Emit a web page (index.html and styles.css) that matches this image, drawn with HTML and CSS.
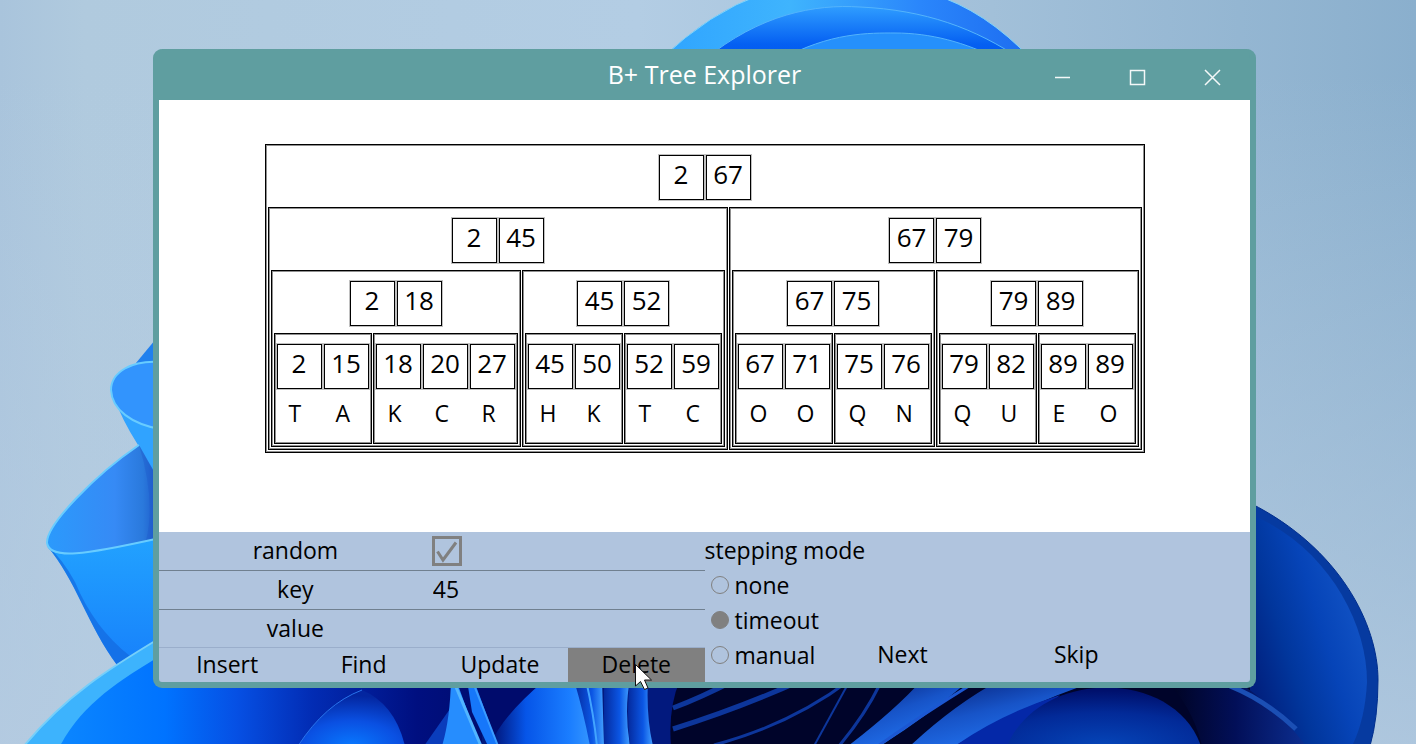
FILE: index.html
```html
<!DOCTYPE html>
<html lang="en">
<head>
<meta charset="utf-8">
<meta name="viewport" content="width=device-width, initial-scale=1">
<title>B+ Tree Explorer</title>
<link rel="stylesheet" href="styles.css">
</head>
<body>
<svg class="wallpaper" viewBox="0 0 1416 744" preserveAspectRatio="xMidYMid slice" aria-hidden="true">
  <defs>
    <linearGradient id="sky" x1="0" y1="0" x2="1" y2="0"><stop offset="0" stop-color="#a9c4dc"/><stop offset=".06" stop-color="#b0cade"/><stop offset=".45" stop-color="#b3cde4"/><stop offset=".7" stop-color="#a2c0d9"/><stop offset="1" stop-color="#8aafcd"/></linearGradient>
    <linearGradient id="fade" x1="0" y1="0" x2="0" y2="1"><stop offset=".1" stop-color="#b6cce2" stop-opacity="0"/><stop offset="1" stop-color="#b6cce2" stop-opacity=".8"/></linearGradient>
    <linearGradient id="top1" x1="0" y1="0" x2="1" y2="0"><stop offset="0" stop-color="#2fa4ff"/><stop offset=".35" stop-color="#3fb4fd"/><stop offset=".7" stop-color="#2a86fb"/><stop offset="1" stop-color="#1d6cf0"/></linearGradient>
    <linearGradient id="top2" x1="0" y1="0" x2="0" y2="1"><stop offset="0" stop-color="#2f9dff"/><stop offset=".7" stop-color="#0560f2"/><stop offset="1" stop-color="#0256ee"/></linearGradient>
    <linearGradient id="petal" x1="0" y1="0" x2="1" y2="0"><stop offset="0" stop-color="#2b9afc"/><stop offset=".6" stop-color="#368af5"/><stop offset=".85" stop-color="#2a79dc"/><stop offset="1" stop-color="#1b54c8"/></linearGradient>
    <linearGradient id="under" x1="0" y1="0" x2="0" y2="1"><stop offset="0" stop-color="#22a2ff"/><stop offset="1" stop-color="#1781fb"/></linearGradient>
    <linearGradient id="base" gradientUnits="userSpaceOnUse" x1="60" y1="0" x2="480" y2="0"><stop offset="0" stop-color="#0b86ff"/><stop offset=".25" stop-color="#0073ff"/><stop offset=".42" stop-color="#0650e4"/><stop offset=".6" stop-color="#022cb4"/><stop offset=".85" stop-color="#000f80"/><stop offset="1" stop-color="#000c70"/></linearGradient>
    <radialGradient id="bud" cx=".5" cy="1" r=".9"><stop offset="0" stop-color="#0878ff"/><stop offset=".5" stop-color="#0a50e2"/><stop offset="1" stop-color="#0326a0"/></radialGradient>
    <linearGradient id="mid" x1="0" y1="0" x2="1" y2="0"><stop offset="0" stop-color="#000b68"/><stop offset=".35" stop-color="#0655e8"/><stop offset=".75" stop-color="#1a7dff"/><stop offset="1" stop-color="#3a9bff"/></linearGradient>
    <linearGradient id="rib" x1="0" y1="0" x2="1" y2="0"><stop offset="0" stop-color="#042a9e"/><stop offset=".6" stop-color="#0b56e4"/><stop offset="1" stop-color="#42a0ff"/></linearGradient>
    <linearGradient id="blade" x1="0" y1="0" x2=".7" y2="1"><stop offset="0" stop-color="#03186c"/><stop offset=".5" stop-color="#1754c8"/><stop offset="1" stop-color="#247afa"/></linearGradient>
    <radialGradient id="orb" cx=".5" cy="1" r=".95"><stop offset="0" stop-color="#0545b8"/><stop offset=".6" stop-color="#022a98"/><stop offset="1" stop-color="#00106c"/></radialGradient>
    <linearGradient id="right" gradientUnits="userSpaceOnUse" x1="1240" y1="640" x2="1370" y2="600"><stop offset="0" stop-color="#01207e"/><stop offset=".3" stop-color="#01369c"/><stop offset=".6" stop-color="#0644b8"/><stop offset="1" stop-color="#1557c8"/></linearGradient>
    <linearGradient id="shade" x1="0" y1="0" x2="1" y2="0"><stop offset="0" stop-color="#00031f"/><stop offset=".5" stop-color="#020f58"/><stop offset="1" stop-color="#0c2e90"/></linearGradient>
  </defs>
  <rect width="1416" height="744" fill="url(#sky)"/>
  <rect width="1416" height="744" fill="url(#fade)"/>

  <path d="M660 60 Q710 12 762 -6 H932 Q985 10 1032 60Z" fill="url(#top1)" stroke="#7fd4fa" stroke-width="1"/>
  <path d="M704 60 C760 14 815 4 860 7 C925 10 975 28 1022 60Z" fill="url(#top2)" stroke="#54b4fc"/>
  <path d="M780 60 C830 32 870 33 895 33 C930 33 965 42 1000 60Z" fill="#2590fb" stroke="#54b4fc"/>

  <path d="M160 334 L136 363 L160 366Z" fill="#2080ee"/>
  <path d="M112 393 Q122 420 138 445 L160 486 V410Z" fill="#30a3ff"/>
  <path d="M160 362 C132 360 111 372 111 390 C112 410 132 424 160 429Z" fill="#3294fd" stroke="#68ccff" stroke-width="2"/>
  <path d="M139 445 C95 475 46 525 47 543 C50 560 84 555 160 538 V482Z" fill="url(#petal)"/>
  <path d="M139 445 L160 484 V538 L146 541 Q156 500 139 445Z" fill="#1c55c8" opacity=".35"/>
  <path d="M47 546 C53 560 87 553 160 538 V650 L117 665 C88 626 76 580 47 546Z" fill="url(#under)"/>
  <path d="M47 546 Q62 558 75 582 Q94 628 130 656 L117 665 C88 626 76 580 47 546Z" fill="#1267dd" opacity=".65"/>
  <path d="M139 445 C95 475 46 525 47 543 C50 560 84 555 160 538" fill="none" stroke="#68ccff" stroke-width="2"/>

  <rect x="470" y="670" width="780" height="80" fill="#02197e"/>
  <path d="M24 746 C65 696 110 668 160 638 H480 V746Z" fill="#3db3fd"/>
  <path d="M24 746 C65 696 110 668 160 638" fill="none" stroke="#76cffa" stroke-width="2"/>
  <path d="M60 746 C82 704 120 680 160 656 H482 V746Z" fill="url(#base)"/>
  <path d="M298 746 Q325 704 362 690 Q395 704 405 746Z" fill="url(#bud)"/>
  <path d="M298 746 Q325 704 362 690" fill="none" stroke="#2873ec"/>
  <path d="M424 746 L452 706 L450 746Z" fill="#0a3dbc"/>
  <path d="M488 746 Q495 715 540 680 H580 L596 746Z" fill="url(#mid)"/>
  <path d="M470 680 H545 Q500 718 490 746Z" fill="#000b6c"/>
  <path d="M451 680 Q450 720 442 746 H480 L458 685Z" fill="#268dfe"/>
  <path d="M453 680 L481 746" stroke="#52b5ff" stroke-width="3"/>
  <path d="M467 680 L472 712 L488 746 H498 L476 686Z" fill="#1677fa"/>
  <path d="M472 680 L498 746" stroke="#3b9cff" stroke-width="2"/>
  <path d="M574 680 H602 L604 746 H590 Q584 714 574 680Z" fill="url(#rib)"/>
  <path d="M586 680 Q594 716 597 746" fill="none" stroke="#42a4ff" stroke-width="2"/>
  <path d="M604 680 H630 Q624 710 630 746 H604Z" fill="url(#rib)"/>
  <path d="M630 680 H648 Q646 716 653 746 H630 Q626 710 630 680Z" fill="url(#rib)"/>
  <path d="M680 680 H1250 V746 H671 Q668 708 680 680Z" fill="#00042a"/>
  <g fill="none" stroke="#0d369b" stroke-width="5">
    <path d="M673 708 Q700 698 735 680"/>
    <path d="M673 729 Q740 708 802 680"/>
    <path d="M714 745 Q790 725 850 680" stroke-width="3"/>
    <path d="M814 746 L848 684" stroke-width="2"/>
    <path d="M839 746 Q865 715 880 684" stroke-width="3"/>
  </g>
  <path d="M848 746 Q895 710 922 680 H970 Q925 718 880 746Z" fill="url(#blade)"/>
  <path d="M878 746 Q920 716 972 684" fill="none" stroke="#1c57d2" stroke-width="3"/>
  <path d="M910 746 Q955 704 1000 680 H1100 Q1025 704 955 746Z" fill="url(#blade)"/>
  <path d="M955 746 Q1000 714 1060 695 L1010 746Z" fill="#0428a8"/>
  <path d="M1007 746 C1040 668 1174 668 1201 746Z" fill="url(#orb)"/>

  <path d="M1250 503 C1340 548 1378 625 1378 680 Q1378 718 1370 746 H1250Z" fill="#063aa0"/>
  <path d="M1250 514 C1325 545 1367 620 1367 682 Q1365 720 1352 746 H1250Z" fill="url(#right)"/>
  <path d="M1250 503 C1340 548 1378 625 1378 680 Q1378 718 1370 746" fill="none" stroke="#002d8c" stroke-width="1"/>
  <path d="M1165 680 H1235 Q1275 705 1306 746 H1202 Q1192 705 1165 680Z" fill="url(#shade)"/>
  <path d="M1230 686 Q1265 700 1296 729" fill="none" stroke="#1b4fb4" stroke-width="5"/>
</svg>

<main class="window">
  <header class="titlebar">
    <h1 class="title">B+ Tree Explorer</h1>
    <div class="window-buttons">
      <button class="window-button" aria-label="Minimize"><svg width="17" height="17" viewBox="0 0 17 17"><path d="M1 8.500H16"/></svg></button>
      <button class="window-button" aria-label="Maximize"><svg width="17" height="17" viewBox="0 0 17 17"><path d="M1.500 1.500H15.500V15.500H1.500Z"/></svg></button>
      <button class="window-button" aria-label="Close"><svg width="17" height="17" viewBox="0 0 17 17"><path d="M1 1L16 16M16 1L1 16"/></svg></button>
    </div>
  </header>

  <section class="canvas" aria-label="Tree">
    <div class="node">
      <div class="keys"><span class="key">2</span><span class="key">67</span></div>
      <div class="children">
        <div class="node">
          <div class="keys"><span class="key">2</span><span class="key">45</span></div>
          <div class="children">
            <div class="node">
              <div class="keys"><span class="key">2</span><span class="key">18</span></div>
              <div class="children">
                <div class="node leaf">
                  <div class="keys"><span class="key">2</span><span class="key">15</span></div>
                  <div class="values"><span class="value">T</span><span class="value">A</span></div>
                </div>
                <div class="node leaf">
                  <div class="keys"><span class="key">18</span><span class="key">20</span><span class="key">27</span></div>
                  <div class="values"><span class="value">K</span><span class="value">C</span><span class="value">R</span></div>
                </div>
              </div>
            </div>
            <div class="node">
              <div class="keys"><span class="key">45</span><span class="key">52</span></div>
              <div class="children">
                <div class="node leaf">
                  <div class="keys"><span class="key">45</span><span class="key">50</span></div>
                  <div class="values"><span class="value">H</span><span class="value">K</span></div>
                </div>
                <div class="node leaf">
                  <div class="keys"><span class="key">52</span><span class="key">59</span></div>
                  <div class="values"><span class="value">T</span><span class="value">C</span></div>
                </div>
              </div>
            </div>
          </div>
        </div>
        <div class="node">
          <div class="keys"><span class="key">67</span><span class="key">79</span></div>
          <div class="children">
            <div class="node">
              <div class="keys"><span class="key">67</span><span class="key">75</span></div>
              <div class="children">
                <div class="node leaf">
                  <div class="keys"><span class="key">67</span><span class="key">71</span></div>
                  <div class="values"><span class="value">O</span><span class="value">O</span></div>
                </div>
                <div class="node leaf">
                  <div class="keys"><span class="key">75</span><span class="key">76</span></div>
                  <div class="values"><span class="value">Q</span><span class="value">N</span></div>
                </div>
              </div>
            </div>
            <div class="node">
              <div class="keys"><span class="key">79</span><span class="key">89</span></div>
              <div class="children">
                <div class="node leaf">
                  <div class="keys"><span class="key">79</span><span class="key">82</span></div>
                  <div class="values"><span class="value">Q</span><span class="value">U</span></div>
                </div>
                <div class="node leaf">
                  <div class="keys"><span class="key">89</span><span class="key">89</span></div>
                  <div class="values"><span class="value">E</span><span class="value">O</span></div>
                </div>
              </div>
            </div>
          </div>
        </div>
      </div>
    </div>
  </section>

  <section class="controls">
    <form class="entry">
      <div class="field">
        <label class="field-label" for="random">random</label>
        <span class="check">
          <input class="check-box" type="checkbox" id="random" checked>
          <svg class="check-mark" width="30" height="30" viewBox="0 0 30 30" aria-hidden="true"><path d="M5.500 15.500L11 24L24 6.500"/></svg>
        </span>
      </div>
      <div class="field">
        <label class="field-label" for="key">key</label>
        <input class="field-input" type="text" id="key" value="45">
      </div>
      <div class="field">
        <label class="field-label" for="value">value</label>
        <input class="field-input" type="text" id="value">
      </div>
      <div class="actions">
        <button class="button" type="button">Insert</button>
        <button class="button" type="button">Find</button>
        <button class="button" type="button">Update</button>
        <button class="button button-active" type="button">Delete<svg class="pointer" width="20" height="28" viewBox="0 0 20 28" aria-hidden="true"><path d="M1.500 1.500V23L6.500 18.500L10.500 26.500L14 25L10.500 17H17.500Z"/></svg></button>
      </div>
    </form>
    <div class="stepping" role="radiogroup" aria-labelledby="mode">
      <span class="mode-title" id="mode">stepping mode</span>
      <label class="option"><input class="radio" type="radio" name="mode">none</label>
      <label class="option"><input class="radio" type="radio" name="mode" checked>timeout</label>
      <div class="manual">
        <label class="option"><input class="radio" type="radio" name="mode">manual</label>
        <button class="button" type="button">Next</button>
        <button class="button" type="button">Skip</button>
      </div>
    </div>
  </section>
</main>
</body>
</html>
```
FILE: styles.css
```css
* {
  box-sizing: border-box;
}

body {
  margin: 0;
  min-height: 100vh;
  padding: 49px 160px 56px 153px;
  overflow: hidden;
  background: #b0cade;
  color: #000;
  font: 23px/32px "Open Sans", "Noto Sans", sans-serif;
}

button,
input {
  font: inherit;
  color: inherit;
}

button {
  border: 0;
  padding: 0;
  background: none;
}

.wallpaper {
  position: absolute;
  inset: 0;
  width: 100%;
  height: 100%;
  z-index: -1;
}

.window {
  border: 6px solid #5f9ea0;
  border-top: 0;
  border-radius: 9px;
  background: #5f9ea0;
}

.titlebar {
  display: grid;
  grid-template-columns: 1fr auto 1fr;
  align-items: center;
  height: 51px;
  color: #fff;
}

.title {
  grid-column: 2;
  margin: 0;
  padding-bottom: 2px;
  font-size: 25px;
  font-weight: 400;
}

.window-buttons {
  display: flex;
  justify-content: flex-end;
  padding-top: 6px;
}

.window-button {
  display: grid;
  place-items: center;
  width: 75px;
  height: 45px;
}

.window-button svg {
  fill: none;
  stroke: #f4f8f8;
  stroke-width: 1.500;
}

.canvas {
  display: flex;
  justify-content: center;
  align-items: flex-start;
  min-height: 432px;
  padding-top: 44px;
  background: #fff;
}

.node {
  border: 1px solid #000;
  box-shadow: inset 0 0 0 1px #909090;
  padding: 10px 2px 2px;
}

.children {
  display: flex;
  gap: 1px;
  margin-top: 7px;
}

.keys {
  display: flex;
  justify-content: center;
  gap: 2px;
}

.key {
  width: 45px;
  height: 45px;
  border: 1px solid #000;
  box-shadow: 0 0 0 1px #c0c0c0;
  font-size: 26px;
  line-height: 36px;
  text-align: center;
}

.values {
  display: flex;
  gap: 2px;
  padding: 8px 0 12px;
}

.value {
  width: 45px;
  padding-left: 12px;
}

.controls {
  display: grid;
  grid-template-columns: 1fr 1fr;
  border-radius: 0 0 3px 3px;
  background: #b0c4de;
}

.field {
  display: grid;
  grid-template-columns: 1fr 1fr;
  align-items: center;
  height: 39px;
  border-bottom: 1px solid #708090;
}

.field:nth-child(3) {
  height: 38px;
  border-color: #9aaecb;
}

.field-label {
  padding-bottom: 2px;
  text-align: center;
}

.field-input {
  width: 100%;
  border: 0;
  padding: 0 1px 2px;
  background: none;
  outline: none;
}

.check {
  display: grid;
  width: 30px;
}

.check-box,
.check-mark {
  grid-area: 1 / 1;
}

.check-box {
  appearance: none;
  width: 30px;
  height: 30px;
  margin: 0;
  border: 3px solid #808080;
}

.check-mark {
  fill: none;
  stroke: #808080;
  stroke-width: 3;
  pointer-events: none;
}

.actions {
  display: grid;
  grid-template-columns: repeat(4, 1fr);
}

.button {
  position: relative;
  height: 34px;
  padding-bottom: 2px;
  line-height: 32px;
}

.button-active {
  background: #808080;
}

.pointer {
  position: absolute;
  left: 66px;
  top: 15px;
  z-index: 1;
  fill: #fff;
  stroke: #111;
}

.stepping {
  display: grid;
  grid-template-rows: 35px repeat(3, 35px);
  align-items: center;
}

.option {
  display: flex;
  align-items: center;
  gap: 6px;
  padding-left: 6px;
}

.radio {
  appearance: none;
  width: 18px;
  height: 18px;
  margin: 0;
  border: 1px solid #808080;
  border-radius: 50%;
}

.radio:checked {
  background: #808080;
}

.manual {
  display: grid;
  grid-template-columns: 111px 2fr 2fr 1fr;
  align-items: center;
}
```
